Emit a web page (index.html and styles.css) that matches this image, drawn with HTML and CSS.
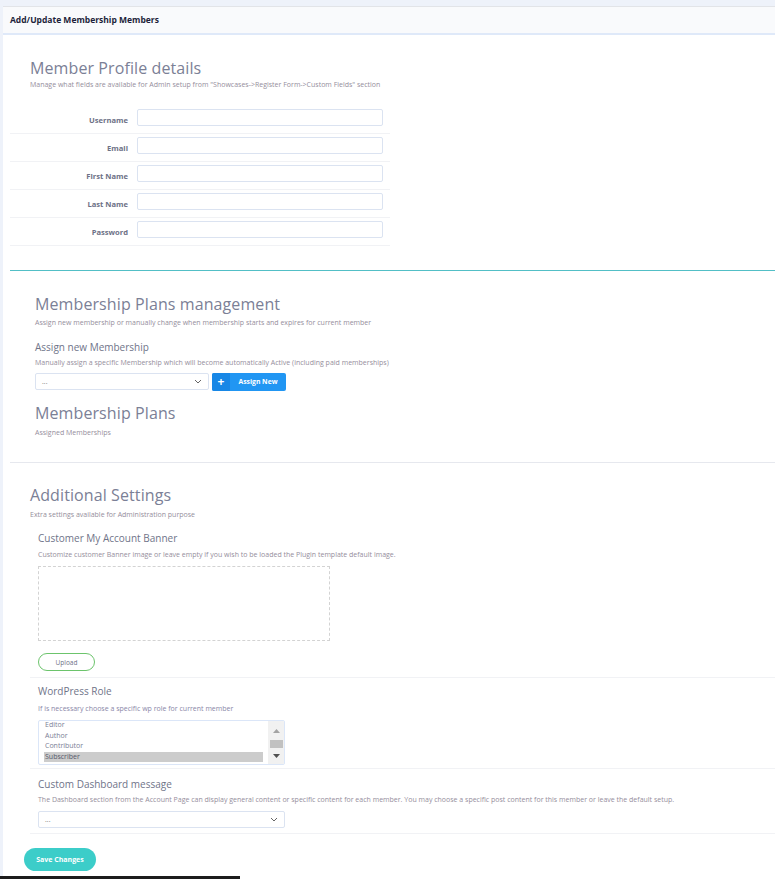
FILE: index.html
```html
<!DOCTYPE html>
<html>
<head>
    <title>Add/Update Membership Members</title>
    <link rel="stylesheet" href="styles.css">
</head>
<body>
    <div class="card">
        <div class="card-header">Add/Update Membership Members</div>

        <div class="section profile">
            <h2>Member Profile details</h2>
            <p class="desc">Manage what fields are available for Admin setup from "Showcases-&gt;Register Form-&gt;Custom Fields" section</p>

            <div class="form-table">
                <div class="form-row">
                    <label>Username</label>
                    <input type="text">
                </div>
                <div class="form-row">
                    <label>Email</label>
                    <input type="text">
                </div>
                <div class="form-row">
                    <label>First Name</label>
                    <input type="text">
                </div>
                <div class="form-row">
                    <label>Last Name</label>
                    <input type="text">
                </div>
                <div class="form-row">
                    <label>Password</label>
                    <input type="password">
                </div>
            </div>
        </div>

        <hr class="teal-line">

        <div class="section plans">
            <h2>Membership Plans management</h2>
            <p class="desc">Assign new membership or manually change when membership starts and expires for current member</p>

            <h3>Assign new Membership</h3>
            <p class="desc">Manually assign a specific Membership which will become automatically Active (including paid memberships)</p>
            <div class="assign-row">
                <div class="select-box small">
                    <span>...</span>
                    <svg width="8" height="5" viewBox="0 0 8 5"><path d="M1 1l3 3 3-3" fill="none" stroke="#666" stroke-width="1"/></svg>
                </div>
                <button class="assign-btn">
                    <span class="plus">+</span>
                    <span class="label">Assign New</span>
                </button>
            </div>

            <h2 class="plans-title">Membership Plans</h2>
            <p class="desc">Assigned Memberships</p>
        </div>

        <hr class="grey-line">

        <div class="section settings">
            <h2>Additional Settings</h2>
            <p class="desc">Extra settings available for Administration purpose</p>

            <div class="setting banner">
                <h3>Customer My Account Banner</h3>
                <p class="desc">Customize customer Banner image or leave empty if you wish to be loaded the Plugin template default image.</p>
                <div class="banner-box"></div>
                <button class="upload-btn">Upload</button>
            </div>

            <div class="setting role">
                <h3>WordPress Role</h3>
                <p class="desc role-desc">If is necessary choose a specific wp role for current member</p>
                <div class="listbox">
                    <div class="options">
                        <div class="opt first">Editor</div>
                        <div class="opt">Author</div>
                        <div class="opt">Contributor</div>
                        <div class="opt selected">Subscriber</div>
                    </div>
                    <div class="scrollbar">
                        <svg width="9" height="6" viewBox="0 0 9 6"><path d="M4.5 1L8 5H1z" fill="#a3a3a3"/></svg>
                        <div class="thumb"></div>
                        <svg width="9" height="6" viewBox="0 0 9 6"><path d="M4.5 5L8 1H1z" fill="#505050"/></svg>
                    </div>
                </div>
            </div>

            <div class="setting dashboard">
                <h3>Custom Dashboard message</h3>
                <p class="desc">The Dashboard section from the Account Page can display general content or specific content for each member. You may choose a specific post content for this member or leave the default setup.</p>
                <div class="select-box wide">
                    <span>...</span>
                    <svg width="8" height="5" viewBox="0 0 8 5"><path d="M1 1l3 3 3-3" fill="none" stroke="#666" stroke-width="1"/></svg>
                </div>
            </div>
        </div>

        <button class="save-btn">Save Changes</button>
    </div>
    <div class="bottom-bar"></div>
</body>
</html>
```

FILE: styles.css
```css
body {
    margin: 0;
    padding: 6px 0 0 3px;
    background-color: #eef2fa;
    font-family: "Open Sans", "Liberation Sans", sans-serif;
    color: #7b8096;
    height: 873px;
    overflow: hidden;
    position: relative;
}
.card {
    background-color: #fff;
    border-top: 1px solid #e2e4e8;
    height: 872px;
}
.card-header {
    height: 26px;
    line-height: 26px;
    padding-left: 7px;
    background-color: #f9fafc;
    border-bottom: 2px solid #dfe9f9;
    font-size: 8.5px;
    font-weight: 700;
    color: #1d1f3a;
}
h2 {
    margin: 0;
    font-size: 16px;
    font-weight: 400;
    color: #7b8096;
    letter-spacing: 0.1px;
}
h3 {
    margin: 0;
    font-size: 10px;
    font-weight: 500;
    color: #6f7489;
}
.desc {
    margin: 0;
    font-size: 7px;
    line-height: 10px;
    color: #958e9c;
}

/* member profile */
.section.profile {
    padding: 22px 0 0 27px;
}
.profile .desc {
    margin-top: 1px;
}
.form-table {
    margin: 16px 0 0 -20px;
    width: 380px;
}
.form-row {
    display: flex;
    align-items: center;
    height: 27px;
    border-bottom: 1px solid #f1f2f5;
}
.form-row label {
    width: 118px;
    text-align: right;
    font-size: 7.6px;
    font-weight: 700;
    color: #6d7186;
    padding-right: 9px;
}
.form-row input {
    width: 246px;
    height: 17px;
    box-sizing: border-box;
    border: 1px solid #dbe3f1;
    border-radius: 2px;
    margin-top: -5px;
}
.teal-line {
    margin: 24px 0 0 7px;
    border: none;
    border-top: 1px solid #52bfc6;
}

/* membership plans */
.section.plans {
    padding: 22px 0 0 32px;
}
.plans .desc {
    margin-top: 3px;
}
.plans h3 {
    margin-top: 12px;
}
.plans h3 + .desc {
    margin-top: 4px;
}
.select-box {
    display: flex;
    align-items: center;
    justify-content: space-between;
    box-sizing: border-box;
    height: 17px;
    padding: 0 6px;
    border: 1px solid #dbe3f1;
    border-radius: 2px;
    font-size: 7px;
    color: #777;
}
.select-box.small {
    width: 174px;
}
.select-box.wide {
    width: 247px;
    margin-top: 6px;
}
.assign-row {
    display: flex;
    gap: 3px;
    margin-top: 5px;
}
.assign-btn {
    display: flex;
    padding: 0;
    height: 18px;
    width: 74px;
    border: none;
    border-radius: 2px;
    background-color: #2196f3;
    overflow: hidden;
    color: #fff;
    font-family: inherit;
}
.assign-btn .plus {
    width: 18px;
    height: 18px;
    line-height: 17px;
    background-color: #1787e6;
    font-size: 12px;
    font-weight: 700;
}
.assign-btn .label {
    flex: 1;
    line-height: 18px;
    font-size: 6.8px;
    font-weight: 700;
}
.plans-title {
    margin-top: 11px;
}
.plans .plans-title + .desc {
    margin-top: 4px;
}
.grey-line {
    margin: 24px 0 0 7px;
    border: none;
    border-top: 1px solid #e6e8ee;
}

/* additional settings */
.section.settings {
    padding: 21px 0 0 27px;
}
.settings > .desc {
    margin-top: 4px;
}
.setting {
    padding-left: 8px;
    border-bottom: 1px solid #f1f2f5;
}
.setting .desc {
    margin-top: 5px;
}
.setting.banner {
    padding-top: 11px;
    padding-bottom: 6px;
}
.setting.role {
    padding-top: 6px;
    padding-bottom: 3px;
}
.setting.role .desc {
    margin-top: 6px;
}
.setting.dashboard {
    padding-top: 8px;
    padding-bottom: 5px;
}
.setting.dashboard .desc {
    margin-top: 4px;
}
.banner-box {
    width: 292px;
    height: 75px;
    box-sizing: border-box;
    border: 1px dashed #d3d3d3;
    margin-top: 6px;
}
.upload-btn {
    display: block;
    margin-top: 12px;
    width: 57px;
    height: 18px;
    padding: 0;
    border: 1px solid #6cc46c;
    border-radius: 9px;
    background-color: #fff;
    font-family: inherit;
    font-size: 6.5px;
    color: #6d7186;
}
.role-desc {
    color: #8a87a8;
}
.listbox {
    display: flex;
    width: 247px;
    height: 45px;
    box-sizing: border-box;
    margin-top: 6px;
    border: 1px solid #dbe6f8;
    border-radius: 2px;
    overflow: hidden;
}
.options {
    flex: 1;
    padding: 0 5px;
}
.opt {
    height: 10.5px;
    line-height: 10.5px;
    font-size: 7px;
    color: #7b8096;
    padding-left: 1px;
}
.opt.first {
    margin-top: -1px;
}
.opt.selected {
    background-color: #cccccc;
    color: #55586a;
}
.scrollbar {
    width: 16px;
    background-color: #f1f1f1;
    display: flex;
    flex-direction: column;
    align-items: center;
    justify-content: space-between;
    padding: 7px 0 5px;
}
.scrollbar .thumb {
    width: 13px;
    height: 8px;
    background-color: #c1c1c1;
}
.save-btn {
    display: block;
    margin: 14px 0 0 21px;
    width: 72px;
    height: 23px;
    border: none;
    border-radius: 12px;
    background-color: #3ccdc9;
    color: #fff;
    font-family: inherit;
    font-size: 7px;
    font-weight: 700;
}
.bottom-bar {
    position: absolute;
    left: 0;
    bottom: 0;
    width: 240px;
    height: 3px;
    background-color: #1c1c1c;
}
```
